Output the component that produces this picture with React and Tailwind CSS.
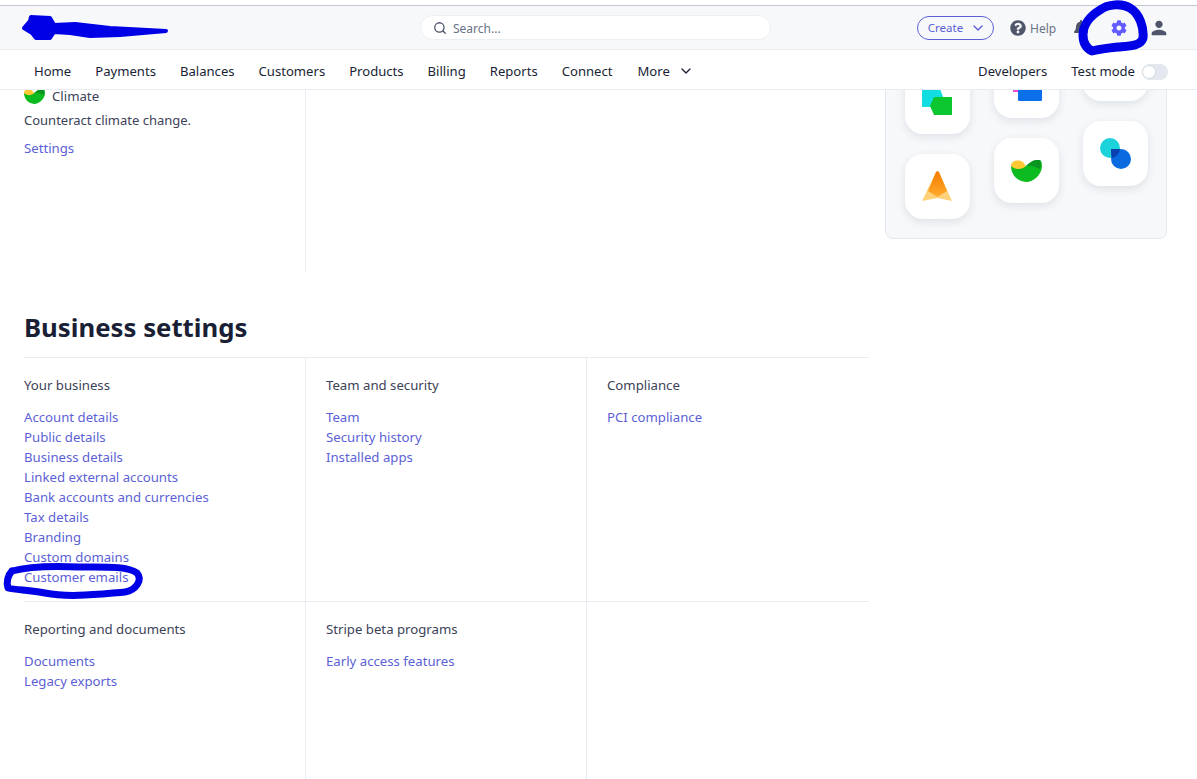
import React from "react";
import { Search, ChevronDown } from "lucide-react";
import { FaQuestionCircle, FaBell, FaCog } from "react-icons/fa";
import { MdPerson } from "react-icons/md";

const navItems = ["Home", "Payments", "Balances", "Customers", "Products", "Billing", "Reports", "Connect"];

const sections = [
  {
    title: "Your business",
    links: [
      "Account details",
      "Public details",
      "Business details",
      "Linked external accounts",
      "Bank accounts and currencies",
      "Tax details",
      "Branding",
      "Custom domains",
      "Customer emails",
    ],
  },
  { title: "Team and security", links: ["Team", "Security history", "Installed apps"] },
  { title: "Compliance", links: ["PCI compliance"] },
  { title: "Reporting and documents", links: ["Documents", "Legacy exports"] },
  { title: "Stripe beta programs", links: ["Early access features"] },
  { title: "", links: [] },
];

const ClimateIcon = ({ className }) => (
  <svg viewBox="0 0 31 22" className={className}>
    <path d="M0 5 C1 1 5 0 8 0.5 C12 1 14 4 15 7 L8 12 L1 10 Z" fill="#ffc933" />
    <path d="M0 6 C4 10 11 10 15 6 C19 2 24 -1 29 0 C31 1 31 5 31 7 C30 15 23 22 15 22 C7 22 0 15 0 6 Z" fill="#0cbb1f" />
    <path d="M15 6 C19 2 24 -1 29 0 C30 3 30 6 29 9 C24 6 19 5 15 6 Z" fill="#0a9422" />
  </svg>
);

const Tile = ({ children }) => (
  <div className="flex h-[65px] w-[65px] items-center justify-center rounded-[18px] bg-white shadow-[0_3px_9px_rgba(60,66,87,0.12)]">
    {children}
  </div>
);

const RightPanel = () => (
  <div className="-mt-[60px] ml-4 flex h-[209px] w-[282px] gap-6 rounded-lg border border-[#e3e8ee] bg-[#f6f8fa] pl-[19px]">
    <div className="mt-[38px] flex flex-col gap-5">
      <Tile>
        <svg viewBox="0 0 31 31" className="h-[31px] w-[31px]">
          <path d="M0 0 H17 L21 11 L8 21 H0 Z" fill="#12dde0" />
          <path d="M12 11 H30 V29 H12 L8 20 Z" fill="#0cc72f" />
        </svg>
      </Tile>
      <Tile>
        <svg viewBox="0 0 31 31" className="h-[31px] w-[31px]">
          <defs>
            <linearGradient id="peak" x1="0" y1="0" x2="0" y2="1">
              <stop offset="0" stopColor="#f57c00" />
              <stop offset="1" stopColor="#ffab2e" />
            </linearGradient>
          </defs>
          <path d="M14 1 C15 0 16 0 17 1 L30 30 L15.5 27 L0 30 Z" fill="#ffd27a" />
          <path d="M14 1 C15 0 16 0 17 1 L25 20 L15.5 26 L6 20 Z" fill="url(#peak)" />
        </svg>
      </Tile>
    </div>
    <div className="mt-[22px] flex flex-col gap-5">
      <Tile>
        <svg viewBox="0 0 31 31" className="h-[31px] w-[31px]">
          <rect x="2" y="15" width="5" height="7" fill="#f04ad1" />
          <rect x="7" y="10" width="24" height="21" rx="1" fill="#0a6fe8" />
        </svg>
      </Tile>
      <Tile>
        <ClimateIcon className="h-[22px] w-[31px]" />
      </Tile>
    </div>
    <div className="mt-[5px] flex flex-col gap-5">
      <Tile />
      <Tile>
        <svg viewBox="0 0 31 31" className="h-[31px] w-[31px]">
          <circle cx="10" cy="10" r="10" fill="#1cd3dc" />
          <circle cx="21" cy="21" r="10" fill="#0a6be0" />
          <path d="M11 11 H20 C19.8 15 16 19.6 11.6 20 C11 17 11 14 11 11 Z" fill="#0a3fb0" />
        </svg>
      </Tile>
    </div>
  </div>
);

export default function App() {
  return (
    <div className="relative h-[779px] overflow-hidden bg-white font-['Noto_Sans',sans-serif] text-[13.2px] text-[#3c4257]">
      <div className="relative z-10 bg-white pt-[5px]">
        <div className="flex h-[45px] items-center border-y border-t-[#c4c8ce] border-b-[#e9ecf0] bg-[#f6f8fa] pl-6">
          <div className="h-[23px] w-[28px] rounded-b-full bg-white" />
          <div className="ml-[368px] flex h-[25px] w-[351px] items-center gap-[6px] rounded-full border border-[#edf0f3] bg-white pl-3 text-[12px] text-[#697386]">
            <Search className="h-[14px] w-[14px] text-[#4f566b]" strokeWidth={2.2} />
            <span className="pt-[2px]">Search...</span>
          </div>
          <div className="ml-[146px] flex h-6 w-[77px] items-center justify-center gap-[7px] rounded-full border border-[#5c5fd6] pl-[3px] text-[11.5px] text-[#5c5fd6]">
            <span className="pt-px">Create</span>
            <ChevronDown className="h-4 w-4" />
          </div>
          <FaQuestionCircle className="ml-4 h-4 w-4 text-[#4f566b]" />
          <span className="ml-1 pt-[2px] text-[12px] text-[#697386]">Help</span>
          <FaBell className="ml-[17px] h-4 w-4 text-[#4f566b]" />
          <FaCog className="ml-[22px] h-4 w-4 text-[#635bff]" />
          <MdPerson className="ml-[21px] h-[22px] w-[22px] text-[#4f566b]" />
        </div>

        <div className="flex h-[40px] items-center border-b border-[#e9ecf0] bg-white pt-1 pr-[29px] pl-[34px] text-[13.1px] text-[#1a1f36]">
          <nav className="flex items-center gap-6">
            {navItems.map((item) => (
              <span key={item}>{item}</span>
            ))}
            <span className="ml-px flex items-center gap-2">
              More
              <ChevronDown className="h-[16px] w-[16px]" />
            </span>
          </nav>
          <span className="ml-auto">Developers</span>
          <span className="ml-6">Test mode</span>
          <div className="ml-[7px] flex h-4 w-[26px] items-center rounded-full bg-[#e3e8ee]">
            <div className="h-[14px] w-[14px] rounded-full border border-[#d5dbe1] bg-white" />
          </div>
        </div>
      </div>

      <div className="flex h-[689px] pl-6">
        <div className="w-[845px] shrink-0">
          <div className="h-[182px]">
            <div className="flow-root h-full w-[282px] border-r border-[#e9ecf0]">
              <div className="-mt-1 flex h-5 items-center gap-[7px]">
                <ClimateIcon className="h-[15px] w-[21px]" />
                <span className="leading-3">Climate</span>
              </div>
              <p className="mt-1 text-[13px] leading-5">Counteract climate change.</p>
              <a className="mt-2 block leading-5 text-[#5c5fd6]">Settings</a>
            </div>
          </div>
          <h1 className="mt-[37px] h-[49px] border-b border-[#e9ecf0] text-[25.75px] leading-9 font-bold text-[#1a1f36]">
            Business settings
          </h1>
          <div className="grid grid-cols-[282px_281px_282px] grid-rows-[244px_200px]">
            {sections.map((section, i) => (
              <div
                key={i}
                className={`pt-[17px] ${i % 3 === 0 ? "" : "pl-5"} ${i % 3 === 2 ? "" : "border-r"} ${i < 3 ? "border-b" : ""} border-[#e9ecf0]`}
              >
                <h3 className="h-5 leading-5">{section.title}</h3>
                <ul className="mt-3">
                  {section.links.map((link) => (
                    <li key={link} className="h-5 leading-5 text-[#5c5fd6]">
                      {link}
                    </li>
                  ))}
                </ul>
              </div>
            ))}
          </div>
        </div>
        <RightPanel />
      </div>

      {/* hand drawn marks on top of the screenshot */}
      <svg className="pointer-events-none absolute top-0 left-0 z-20 h-[779px] w-[1197px]" viewBox="0 0 1197 779" fill="none" stroke="#0000e6" strokeLinecap="round" strokeLinejoin="round">
        <path d="M24 28 L30 21 L31 17 L50 18 L54 25 L75 24 L110 28 L166 31 L120 35 L90 36 L70 33 L54 32 L50 38 L36 38 L32 33 Z" fill="#0000e6" strokeWidth="4" />
        <path d="M1100 10 C1108 4 1122 3 1130 8 C1140 14 1144 28 1143 38 C1141 46 1130 46 1118 47 C1108 48 1100 49 1092 51 C1086 48 1083 42 1083 35 C1083 25 1090 16 1100 10" strokeWidth="9" />
        <path d="M12 571 C30 566 60 566 80 567 C105 567 128 566 137 573 C143 580 136 590 125 592 C100 594 70 598 45 593 C30 590 15 590 8 588 C6 582 8 575 12 571" strokeWidth="7" />
      </svg>
    </div>
  );
}
